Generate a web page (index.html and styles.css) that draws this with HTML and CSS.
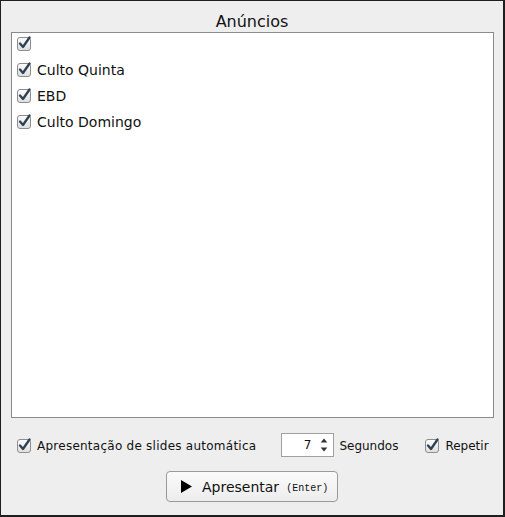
FILE: index.html
```html
<!DOCTYPE html>
<html lang="pt">
<head>
<meta charset="UTF-8">
<title>Anúncios</title>
<link rel="stylesheet" href="styles.css">
</head>
<body>
<div class="window">
    <div class="title">Anúncios</div>
    <div class="list">
        <label class="item"><svg class="check" viewBox="0 0 15 15"><use href="#cb"/></svg><span></span></label>
        <label class="item"><svg class="check" viewBox="0 0 15 15"><use href="#cb"/></svg><span>Culto Quinta</span></label>
        <label class="item"><svg class="check" viewBox="0 0 15 15"><use href="#cb"/></svg><span>EBD</span></label>
        <label class="item"><svg class="check" viewBox="0 0 15 15"><use href="#cb"/></svg><span>Culto Domingo</span></label>
    </div>
    <div class="options">
        <label class="opt auto"><svg class="check" viewBox="0 0 15 15"><use href="#cb"/></svg><span>Apresentação de slides automática</span></label>
        <div class="spinner">
            <span class="value">7</span>
            <span class="arrows">
                <svg viewBox="0 0 9 6" class="arrow"><path d="M4.5 0.5 L8.5 5.5 L0.5 5.5 Z"/></svg>
                <svg viewBox="0 0 9 6" class="arrow"><path d="M0.5 0.5 L8.5 0.5 L4.5 5.5 Z"/></svg>
            </span>
        </div>
        <span class="seconds">Segundos</span>
        <label class="opt repeat"><svg class="check" viewBox="0 0 15 15"><use href="#cb"/></svg><span>Repetir</span></label>
    </div>
    <div class="actions">
        <button class="present">
            <svg class="play" viewBox="0 0 11 13"><path d="M0 0 L11 6.5 L0 13 Z"/></svg>
            <span>Apresentar</span>
            <span class="key">(Enter)</span>
        </button>
    </div>
</div>

<svg width="0" height="0" class="defs">
    <defs>
        <linearGradient id="cbfill" x1="0" y1="0" x2="0" y2="1">
            <stop offset="0" stop-color="#fdfdfd"/>
            <stop offset="1" stop-color="#dedede"/>
        </linearGradient>
        <g id="cb">
            <rect x="0.5" y="1.5" width="13" height="13" rx="2.5" fill="url(#cbfill)" stroke="#8c8c8c"/>
            <path d="M3 7.5 L6 11 L12.5 1.5" fill="none" stroke="#2e4154" stroke-width="2.3" stroke-linecap="round" stroke-linejoin="round"/>
        </g>
    </defs>
</svg>
</body>
</html>
```

FILE: styles.css
```css
html, body {
    margin: 0;
    padding: 0;
}
body {
    font-family: "DejaVu Sans", Verdana, sans-serif;
    font-size: 14px;
    color: #111;
    background: #eeeeee;
}
.window {
    box-sizing: border-box;
    width: 505px;
    height: 517px;
    border-style: solid;
    border-color: #1e1e1e;
    border-width: 1px 2px 2px 1px;
    background: #eeeeee;
    display: flex;
    flex-direction: column;
}
.title {
    text-align: center;
    font-size: 16px;
    height: 31px;
    line-height: 20px;
    padding-top: 11px;
    box-sizing: border-box;
}
.list {
    box-sizing: border-box;
    margin: 0 9px 0 10px;
    height: 386px;
    background: #fff;
    border: 1px solid #8a8a8a;
    padding: 3px 0 0 5px;
    display: flex;
    flex-direction: column;
    gap: 12px;
}
.item {
    display: flex;
    align-items: center;
    height: 14px;
    gap: 5px;
}
.item span {
    margin-top: 2px;
}
.check {
    width: 15px;
    height: 15px;
    flex-shrink: 0;
}
.defs {
    position: absolute;
}
.options {
    display: flex;
    align-items: center;
    height: 24px;
    margin-top: 15px;
    padding-left: 16px;
    font-size: 12px;
    white-space: nowrap;
}
.opt {
    display: flex;
    align-items: center;
    gap: 5px;
}
.opt span,
.seconds {
    padding-top: 1px;
}
.auto span {
    letter-spacing: 0.25px;
}
.auto {
    margin-right: 25px;
}
.spinner {
    box-sizing: border-box;
    width: 53px;
    height: 24px;
    background: #fff;
    border: 1px solid #a0a0a0;
    display: flex;
    align-items: center;
    justify-content: flex-end;
    padding-right: 5px;
}
.value {
    margin-right: 9px;
}
.arrows {
    display: flex;
    flex-direction: column;
    gap: 4px;
}
.arrow {
    width: 8px;
    height: 5px;
    fill: #333;
}
.seconds {
    margin-left: 5px;
    margin-right: 27px;
}
.actions {
    display: flex;
    justify-content: center;
    margin-top: 14px;
}
.present {
    box-sizing: border-box;
    width: 172px;
    height: 31px;
    border: 1px solid #9a9a9a;
    border-radius: 4px;
    background: linear-gradient(#fbfbfb, #ececec);
    font-family: "DejaVu Sans", Verdana, sans-serif;
    font-size: 14px;
    color: #111;
    display: flex;
    align-items: center;
    padding: 0 0 0 14px;
}
.play {
    width: 11px;
    height: 13px;
    margin-right: 10px;
}
.key {
    font-family: "Liberation Mono", "Courier New", monospace;
    font-size: 10px;
    margin-left: 7px;
    margin-top: 3px;
}
```
